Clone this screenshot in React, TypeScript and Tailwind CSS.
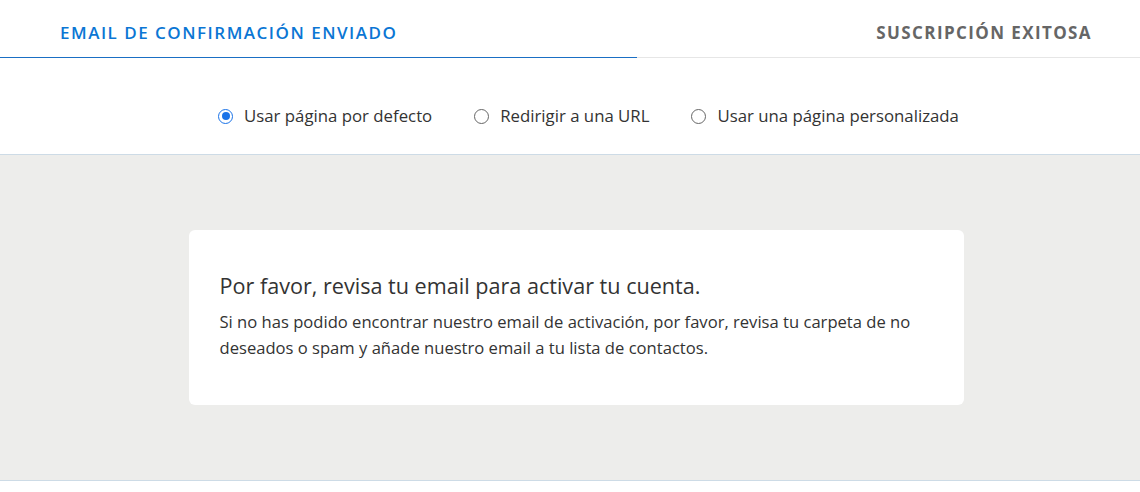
import { useState } from 'react';

const options = [
  { id: 'default', label: 'Usar página por defecto' },
  { id: 'url', label: 'Redirigir a una URL' },
  { id: 'custom', label: 'Usar una página personalizada' },
];

const bodyFont = { fontFamily: '"Open Sans", Lato, sans-serif' };

export default function App() {
  const [selected, setSelected] = useState('default');

  return (
    <div className="w-[1140px] h-[492px] bg-white" style={bodyFont}>
      {/* tabs */}
      <div className="flex h-[58px] border-b border-[#e6e6e6]">
        <div className="w-[637px] pl-[60px] flex items-center border-b border-[#1a6fc4] -mb-px">
          <span className="text-[17px] font-semibold tracking-[1.5px] text-[#0b76d4] pt-[8px]">
            EMAIL DE CONFIRMACIÓN ENVIADO
          </span>
        </div>
        <div className="flex-1 flex items-center justify-end pr-[48px]">
          <span className="text-[17px] font-bold tracking-[1.4px] text-[#666] pt-[8px]">
            SUSCRIPCIÓN EXITOSA
          </span>
        </div>
      </div>

      {/* radio options */}
      <div className="h-[97px] flex items-center justify-center gap-[42px] pt-[20px] pl-[37px] border-b border-[#cddbe6]">
        {options.map((o) => (
          <label key={o.id} className="flex items-center gap-[11px] cursor-pointer">
            <span
              className={
                selected === o.id
                  ? 'w-[15px] h-[15px] rounded-full border-[1.5px] border-[#1a73e8] flex items-center justify-center'
                  : 'w-[15px] h-[15px] rounded-full border-[1.5px] border-[#666] flex items-center justify-center'
              }
              onClick={() => setSelected(o.id)}
            >
              {selected === o.id && <span className="w-[8px] h-[8px] rounded-full bg-[#1a73e8]" />}
            </span>
            <span className="text-[16.8px] text-[#333]">{o.label}</span>
          </label>
        ))}
      </div>

      {/* preview */}
      <div className="h-[326px] bg-[#ededeb] border-b border-[#cddbe6] flex justify-center pl-[12px] pt-[75px]">
        <div className="w-[775px] h-[175px] bg-white rounded-[6px] px-[31px] pt-[41px]">
          <h2 className="text-[21.6px] text-[#333] leading-[30px]">
            Por favor, revisa tu email para activar tu cuenta.
          </h2>
          <p className="mt-[8px] text-[16.6px] leading-[26px] text-[#333]">
            Si no has podido encontrar nuestro email de activación, por favor, revisa tu carpeta de no
            deseados o spam y añade nuestro email a tu lista de contactos.
          </p>
        </div>
      </div>
    </div>
  );
}
